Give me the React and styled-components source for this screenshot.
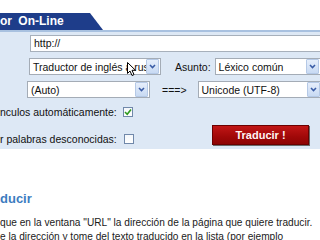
import React from "react";
import styled, { createGlobalStyle } from "styled-components";

const GlobalStyle = createGlobalStyle`
  html, body {
    margin: 0;
    padding: 0;
    background: #fff;
  }

  body {
    width: 320px;
    height: 240px;
    overflow: hidden;
    font-family: "Liberation Sans", Arial, sans-serif;
  }
`;

const Page = styled.div`
  position: relative;
  width: 320px;
  height: 240px;
  overflow: hidden;
  padding-top: 13px;
  box-sizing: border-box;
`;

const Tab = styled.div`
  width: 103px;
  height: 17px;
  background: #1e3d8a;
  clip-path: polygon(0 0, 90px 0, 103px 100%, 0 100%);
  color: #fff;
  font-weight: bold;
  font-size: 12px;
  line-height: 17px;
  white-space: nowrap;
  word-spacing: 3px;
`;

const Panel = styled.div`
  background: #dde8f5;
  border-top: 2px solid #a8c1e0;
  padding: 3px 0 2px;
  display: flex;
  flex-direction: column;
  gap: 6px;
`;

const Row = styled.div`
  display: flex;
  align-items: center;
  height: 17px;
  padding-left: ${(p) => p.$pl}px;
  white-space: nowrap;
  font-size: 10.5px;
  color: #111;
`;

const UrlInput = styled.div`
  flex: none;
  width: 300px;
  height: 17px;
  box-sizing: border-box;
  background: #fff;
  border: 1px solid #a7b0bb;
  padding-left: 3px;
  line-height: 15px;
  font-size: 10.5px;
`;

const SelectBox = styled.div`
  flex: none;
  display: flex;
  align-items: center;
  width: ${(p) => p.$w}px;
  height: 17px;
  box-sizing: border-box;
  background: #fff;
  border: 1px solid #a4acb6;
`;

const SelectText = styled.span`
  flex: 1;
  padding-left: 3px;
  overflow: hidden;
  white-space: nowrap;
`;

const ArrowBtn = styled.span`
  flex: none;
  display: flex;
  align-items: center;
  justify-content: center;
  width: 11px;
  height: 13px;
  margin-right: 1px;
  background: linear-gradient(#e6eefb, #c8daf3);
  border: 1px solid #b5c9e6;
  border-radius: 1px;
`;

const Label = styled.span`
  margin: 0 ${(p) => p.$mr}px 0 ${(p) => p.$ml}px;
`;

const Options = styled.div`
  display: flex;
  height: 43px;
`;

const CheckList = styled.div`
  display: flex;
  flex-direction: column;
  gap: 11px;
`;

const CheckRow = styled.div`
  display: flex;
  align-items: center;
  height: 16px;
  font-size: 10.5px;
  color: #111;
  white-space: nowrap;
`;

const CheckBox = styled.span`
  display: flex;
  align-items: center;
  justify-content: center;
  width: 10px;
  height: 10px;
  margin-left: ${(p) => p.$ml}px;
  box-sizing: border-box;
  border: 1px solid #7088aa;
  background: linear-gradient(#f4f7fb, #fff);
`;

const Button = styled.div`
  align-self: flex-end;
  margin: 0 11px 2px auto;
  width: 97px;
  height: 20px;
  box-sizing: border-box;
  background: linear-gradient(#c11616, #a00808 60%, #8e0404);
  border: 1px solid #6b0000;
  box-shadow: 1px 1px 0 #6a6a6a;
  color: #fff4f4;
  font-size: 11px;
  font-weight: bold;
  line-height: 18px;
  text-align: center;
`;

const Help = styled.div`
  padding-top: 42px;
`;

const Heading = styled.div`
  font-size: 13px;
  font-weight: bold;
  line-height: 16px;
  color: #3c7cc0;
  white-space: nowrap;
`;

const Text = styled.p`
  margin: 9px 0 0;
  font-size: 10.15px;
  line-height: 14px;
  color: #1a1a1a;
  white-space: nowrap;
`;

const Cursor = styled.svg`
  position: absolute;
  left: 127px;
  top: 62px;
`;

function Chevron() {
  return (
    <svg width="7" height="5" viewBox="0 0 7 5">
      <path d="M1 1 L3.5 3.6 L6 1" fill="none" stroke="#3a5ca6" strokeWidth="1.5" />
    </svg>
  );
}

function Select({ w, children }) {
  return (
    <SelectBox $w={w}>
      <SelectText>{children}</SelectText>
      <ArrowBtn>
        <Chevron />
      </ArrowBtn>
    </SelectBox>
  );
}

export default function App() {
  return (
    <>
      <GlobalStyle />
      <Page>
        <Tab>or On-Line</Tab>
        <Panel>
          <Row $pl={30}>
            <UrlInput>http://</UrlInput>
          </Row>
          <Row $pl={29}>
            <Select w={132}>Traductor de inglés a rus</Select>
            <Label $ml={14} $mr={4}>
              Asunto:
            </Label>
            <Select w={106}>Léxico común</Select>
          </Row>
          <Row $pl={27}>
            <Select w={123}>(Auto)</Select>
            <Label $ml={12} $mr={11}>
              ===&gt;
            </Label>
            <Select w={124}>Unicode (UTF-8)</Select>
          </Row>
          <Options>
            <CheckList>
              <CheckRow>
                nculos automáticamente:
                <CheckBox $ml={6}>
                  <svg width="8" height="8" viewBox="0 0 8 8">
                    <path d="M1 4 L3.2 6.2 L7 1.5" fill="none" stroke="#2f9a1f" strokeWidth="1.6" />
                  </svg>
                </CheckBox>
              </CheckRow>
              <CheckRow>
                r palabras desconocidas:
                <CheckBox $ml={7} />
              </CheckRow>
            </CheckList>
            <Button>Traducir !</Button>
          </Options>
        </Panel>
        <Help>
          <Heading>ducir</Heading>
          <Text>
            que en la ventana "URL" la dirección de la página que quiere traducir.
            <br />e la dirección y tome del texto traducido en la lista (por ejemplo
          </Text>
        </Help>
        <Cursor width="10" height="15" viewBox="0 0 10 15">
          <path
            d="M0.5 0.5 L0.5 11.5 L3 9 L5 13.5 L7 12.6 L5 8.3 L8.5 8.3 Z"
            fill="#fff"
            stroke="#000"
            strokeWidth="1"
            strokeLinejoin="round"
          />
        </Cursor>
      </Page>
    </>
  );
}
